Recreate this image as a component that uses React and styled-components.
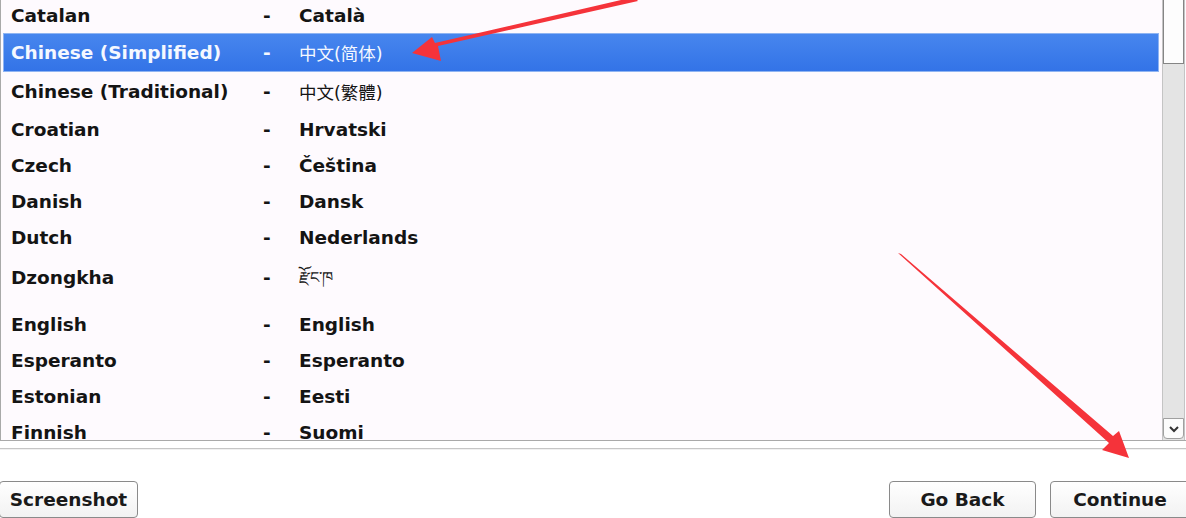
import React from "react";
import styled, { createGlobalStyle } from "styled-components";

const Global = createGlobalStyle`
  html, body { margin: 0; padding: 0; background: #ffffff; }
  body { font-family: "DejaVu Sans", "Noto Sans CJK SC", sans-serif; }
`;

const Screen = styled.div`
  position: relative;
  width: 1186px;
  height: 518px;
  overflow: hidden;
  display: flex;
  flex-direction: column;
  background: #ffffff;
`;

const ListPanel = styled.div`
  height: 441px;
  flex-shrink: 0;
  display: flex;
  border-left: 1px solid #a9a9a9;
  border-bottom: 1px solid #a9a9a9;
  background: #fefafe;
  box-sizing: border-box;
  overflow: hidden;
`;

const Rows = styled.div`
  flex: 1;
  padding-left: 2px;
  margin-top: -3px;
  display: flex;
  flex-direction: column;
`;

const Row = styled.div`
  flex-shrink: 0;
  display: grid;
  grid-template-columns: 252px 36px 1fr;
  align-items: center;
  height: ${(p) => p.$h}px;
  padding-left: 7px;
  padding-bottom: ${(p) => p.$pb || 0}px;
  box-sizing: border-box;
  font-size: 18.5px;
  font-weight: bold;
  color: ${(p) => (p.$sel ? "#f4f8ff" : "#141414")};
  background: ${(p) =>
    p.$sel ? "linear-gradient(#4786ee, #3373e7)" : "transparent"};
  border: 1px solid ${(p) => (p.$sel ? "#8fb4f2" : "transparent")};
  white-space: nowrap;
`;

const Dash = styled.span``;

const Native = styled.span`
  font-size: ${(p) => (p.$cjk ? "17.5px" : "18.5px")};
  font-weight: ${(p) => (p.$cjk ? "normal" : "bold")};
`;

const Tibetan = styled.span`
  font-size: 16px;
  font-weight: normal;
  line-height: 1;
`;

const Scrollbar = styled.div`
  width: 23px;
  margin-left: 3px;
  margin-right: 1px;
  display: flex;
  flex-direction: column;
  background: #e4e4e4;
  border-left: 1px solid #c4c4c4;
  border-right: 1px solid #c4c4c4;
  box-sizing: border-box;
`;

const Thumb = styled.div`
  height: 64px;
  flex-shrink: 0;
  background: #fdfdfd;
  border: 1.5px solid #858585;
  border-top: none;
  box-sizing: border-box;
`;

const Track = styled.div`
  flex: 1;
`;

const ArrowBtn = styled.div`
  height: 21px;
  flex-shrink: 0;
  margin-bottom: 1px;
  background: #fcfcfc;
  border: 1px solid #a0a0a0;
  border-radius: 0 0 4px 4px;
  display: flex;
  align-items: center;
  justify-content: center;
  box-sizing: border-box;
`;

const Separator = styled.div`
  flex-shrink: 0;
  margin-top: 7px;
  height: 1px;
  background: #c6c6c6;
  border-bottom: 1px solid #f0f0f0;
`;

const ButtonBar = styled.div`
  margin-top: 31px;
  display: flex;
  align-items: flex-start;
`;

const Button = styled.div`
  flex-shrink: 0;
  height: 37px;
  width: ${(p) => p.$w}px;
  margin-left: ${(p) => p.$ml || 0}px;
  box-sizing: border-box;
  border: 1px solid #8a8a8a;
  border-radius: 4px;
  background: linear-gradient(#ffffff, #f2f2f2);
  display: flex;
  align-items: center;
  justify-content: center;
  font-size: 18.5px;
  font-weight: bold;
  color: #1a1a1a;
`;

const Overlay = styled.svg`
  position: absolute;
  left: 0;
  top: 0;
  pointer-events: none;
`;

const rows = [
  { n: "Catalan", v: "Català", h: 36 },
  { n: "Chinese (Simplified)", v: "中文(简体)", h: 39, cjk: true, sel: true },
  { n: "Chinese (Traditional)", v: "中文(繁體)", h: 39, cjk: true },
  { n: "Croatian", v: "Hrvatski", h: 36 },
  { n: "Czech", v: "Čeština", h: 36 },
  { n: "Danish", v: "Dansk", h: 36 },
  { n: "Dutch", v: "Nederlands", h: 36 },
  { n: "Dzongkha", v: "རྫོང་ཁ", h: 51, pb: 6, tib: true },
  { n: "English", v: "English", h: 36 },
  { n: "Esperanto", v: "Esperanto", h: 36 },
  { n: "Estonian", v: "Eesti", h: 36 },
  { n: "Finnish", v: "Suomi", h: 36 },
];

export default function App() {
  return (
    <>
      <Global />
      <Screen>
        <ListPanel>
          <Rows>
            {rows.map((r) => (
              <Row key={r.n} $h={r.h} $pb={r.pb} $sel={r.sel}>
                <span>{r.n}</span>
                <Dash>-</Dash>
                {r.tib ? (
                  <Tibetan>{r.v}</Tibetan>
                ) : (
                  <Native $cjk={r.cjk}>{r.v}</Native>
                )}
              </Row>
            ))}
          </Rows>
          <Scrollbar>
            <Thumb />
            <Track />
            <ArrowBtn>
              <svg width="12" height="8" viewBox="0 0 12 8">
                <path d="M2 2 L6 6 L10 2" fill="none" stroke="#333" strokeWidth="2" />
              </svg>
            </ArrowBtn>
          </Scrollbar>
        </ListPanel>
        <Separator />
        <ButtonBar>
          <Button $w={139} $ml={-1}>Screenshot</Button>
          <Button $w={147} $ml={751}>Go Back</Button>
          <Button $w={140} $ml={14}>Continue</Button>
        </ButtonBar>
        <Overlay width="1186" height="518" viewBox="0 0 1186 518">
          <polygon
            points="634,-3 638,1 438,46 441,61 412,53 432,37 435,43"
            fill="#f5333a"
          />
          <polygon
            points="898,253 901,254 1113,436 1119,431 1129,458 1102,450 1109,443"
            fill="#f5333a"
          />
        </Overlay>
      </Screen>
    </>
  );
}
